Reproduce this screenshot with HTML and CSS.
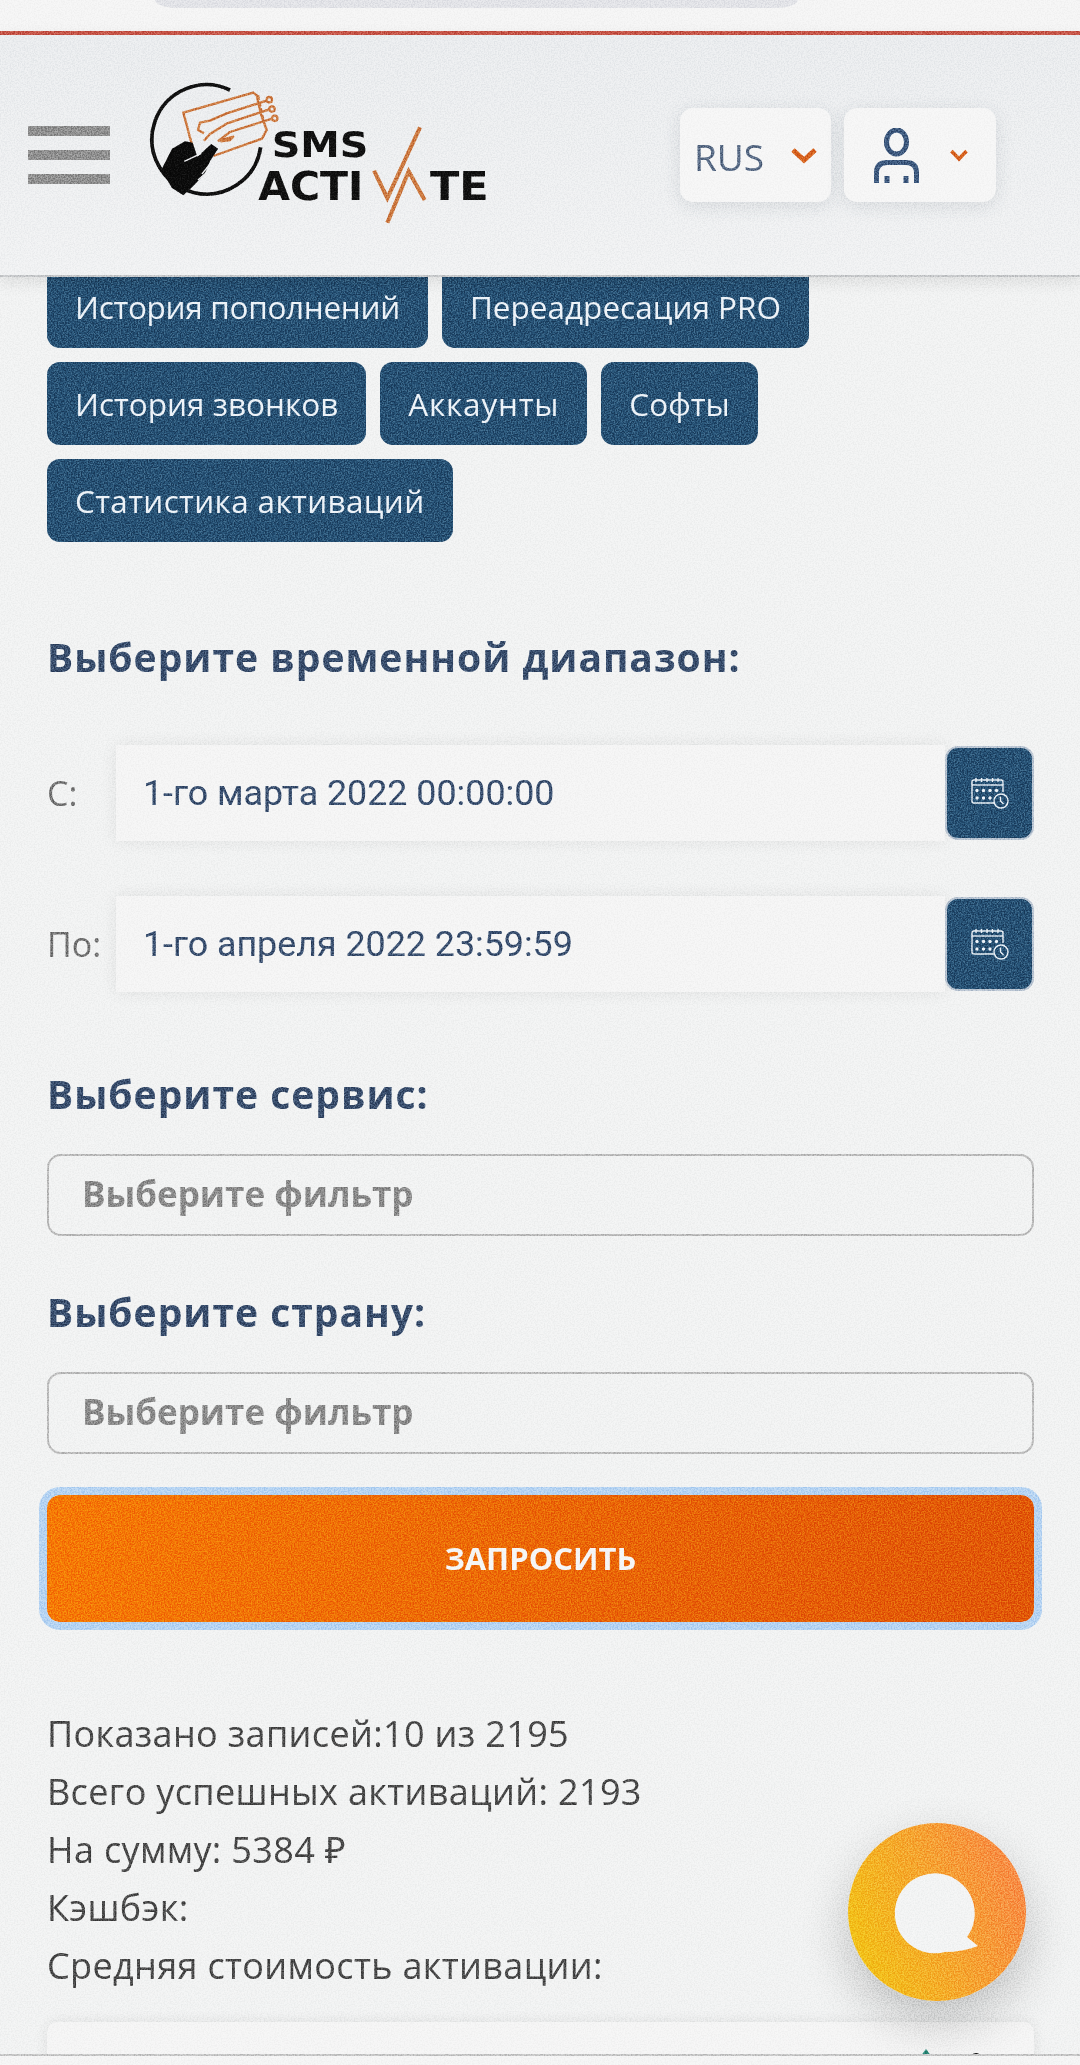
FILE: index.html
```html
<!DOCTYPE html>
<html lang="ru">
<head>
<meta charset="utf-8">
<title>SMS-Activate</title>
<link rel="stylesheet" href="styles.css">
</head>
<body>
<div class="page">
  <div class="topbar"><div class="pill"></div></div>
  <header class="header">
    <div class="burger"><span></span><span></span><span></span></div>
    <svg class="logo" viewBox="0 0 1110 510" width="370" height="170" aria-label="SMS Activate">
      <path d="M300 60A164 164 0 1 0 392 232" fill="none" stroke="#111" stroke-width="11"/>
      <g fill="none" stroke="#cf7d42" stroke-width="7" stroke-linejoin="round">
        <path d="M190 240L160 128L370 68L380 76L392 130L410 180L396 206L250 258"/>
        <path d="M410 92L290 130L240 152L210 158L204 180L222 190"/>
        <path d="M418 118L292 160L240 192L222 212"/>
        <path d="M426 146L300 186L266 212L310 200L300 210L272 214"/>
        <path d="M384 76L400 150" stroke-dasharray="14 6"/>
        <circle cx="418" cy="89" r="8"/><circle cx="426" cy="117" r="8"/><circle cx="434" cy="145" r="8"/>
      </g>
      <path d="M94 300L126 236L165 214L188 218L202 260L244 222L264 236L240 274L224 312L192 346L160 376L126 354Z" fill="#0c0c0c"/>
      <path d="M163 274L214 250M196 350L232 336M204 330L238 300M216 312L240 282" fill="none" stroke="#f0f1f3" stroke-width="4"/>
      <text class="logo-text" x="425" y="262" textLength="290" lengthAdjust="spacingAndGlyphs">SMS</text>
      <text class="logo-text logo-big" x="385" y="390" textLength="315" lengthAdjust="spacingAndGlyphs">ACTI</text>
      <text class="logo-text logo-big" x="900" y="390" textLength="176" lengthAdjust="spacingAndGlyphs">TE</text>
      <path d="M732 302L772 384L870 172M772 458L836 304L884 390" fill="none" stroke="#cf7d42" stroke-width="12"/>
    </svg>
    <div class="lang">
      <span class="lang-text">RUS</span>
      <svg class="chev-big" viewBox="0 0 26 17" width="26" height="17"><path d="M2 3L13 13L24 3" fill="none" stroke="#d9661f" stroke-width="5"/></svg>
    </div>
    <div class="user">
      <svg viewBox="0 0 45 55" width="45" height="55"><g fill="none" stroke="#3f5c82" stroke-width="5"><ellipse cx="22.5" cy="14" rx="10" ry="12"/><path d="M2.500 55V45Q2.500 34.500 13 34.500H32Q42.500 34.500 42.500 45V55"/><path d="M13 48V55M32 48V55"/></g></svg>
      <svg class="chev-small" viewBox="0 0 18 13" width="18" height="13"><path d="M1.500 2L9 10L16.500 2" fill="none" stroke="#d9661f" stroke-width="3.500"/></svg>
    </div>
  </header>

  <main class="main">
    <nav class="tabs">
      <a class="tab tab-tight">История пополнений</a>
      <a class="tab">Переадресация PRO</a>
      <a class="tab">История звонков</a>
      <a class="tab tab-wide">Аккаунты</a>
      <a class="tab">Софты</a>
      <a class="tab tab-loose">Статистика активаций</a>
    </nav>

    <h2 class="title title-range">Выберите временной диапазон:</h2>

    <div class="date-row">
      <span class="date-label">С:</span>
      <div class="date-input"><span class="date-value">1-го марта 2022 00:00:00</span></div>
      <button class="date-btn"><svg viewBox="0 0 38 31" width="38" height="31"><use href="#cal"/></svg></button>
    </div>
    <div class="date-row date-row-next">
      <span class="date-label">По:</span>
      <div class="date-input"><span class="date-value">1-го апреля 2022 23:59:59</span></div>
      <button class="date-btn"><svg viewBox="0 0 38 31" width="38" height="31"><use href="#cal"/></svg></button>
    </div>

    <h2 class="title title-service">Выберите сервис:</h2>
    <div class="select">Выберите фильтр</div>
    <h2 class="title title-country">Выберите страну:</h2>
    <div class="select">Выберите фильтр</div>

    <button class="submit">ЗАПРОСИТЬ</button>

    <div class="stats">
      <div>Показано записей:10 из 2195</div>
      <div>Всего успешных активаций: 2193</div>
      <div>На сумму: 5384 ₽</div>
      <div>Кэшбэк:</div>
      <div>Средняя стоимость активации:</div>
    </div>

    <div class="table-card">
      <svg class="sort" viewBox="0 0 64 12" width="64" height="12"><path d="M0 12L6 4L12 12Z" fill="#2a8c7c"/><circle cx="56" cy="12" r="4" fill="#111"/></svg>
    </div>
  </main>

  <button class="chat" aria-label="Чат">
    <svg viewBox="0 0 178 178" width="178" height="178">
      <defs><linearGradient id="chatg" x1="0" y1="0.75" x2="1" y2="0.35"><stop offset="0.05" stop-color="#f3c418"/><stop offset="1" stop-color="#f88f48"/></linearGradient></defs>
      <circle cx="89" cy="89" r="89" fill="url(#chatg)"/>
      <path d="M119 114A40 40 0 1 0 97 129Q114 129 130 123Z" fill="#f3f4f4"/>
    </svg>
  </button>
  <div class="bottom-bar"></div>

  <svg class="defs" width="0" height="0" aria-hidden="true">
    <symbol id="cal" viewBox="0 0 38 31">
      <g fill="none" stroke="#eef3f8" stroke-width="1.400">
        <path d="M26 25H3Q1 25 1 23V4Q1 2 3 2H30Q32 2 32 4V14"/>
        <path d="M1 7H32"/>
        <path d="M5 0V4M10.500 0V4M16 0V4M21.500 0V4M27 0V4"/>
      </g>
      <g fill="#eef3f8">
        <circle cx="6" cy="12.500" r="1.700"/><circle cx="12.500" cy="12.500" r="1.700"/><circle cx="19" cy="12.500" r="1.700"/><circle cx="25.500" cy="12.500" r="1.700"/>
        <circle cx="6" cy="20" r="1.700"/><circle cx="12.500" cy="20" r="1.700"/><circle cx="19" cy="20" r="1.700"/>
      </g>
      <circle cx="30" cy="23" r="7" fill="#275377" stroke="#eef3f8" stroke-width="1.400"/>
      <path d="M29.500 18.500V23L32.500 26" fill="none" stroke="#eef3f8" stroke-width="1.400"/>
    </symbol>
  </svg>

  <svg class="grain" width="1080" height="2065" aria-hidden="true">
    <filter id="noise" x="0" y="0" width="100%" height="100%" color-interpolation-filters="sRGB"><feTurbulence type="fractalNoise" baseFrequency="0.7" numOctaves="2" seed="4"/><feColorMatrix type="matrix" values="2.5 0 0 0 -0.8  2.5 0 0 0 -0.8  2.5 0 0 0 -0.8  0 0 0 0 1"/></filter>
    <rect width="1080" height="2065" filter="url(#noise)"/>
  </svg>
</div>
</body>
</html>
```
FILE: styles.css
```css
* { box-sizing: border-box; }
html, body { margin: 0; padding: 0; }
body { background: #f2f3f3; font-family: "Open Sans", "Noto Sans", sans-serif; }
.page { position: relative; width: 1080px; height: 2065px; overflow: hidden; background: #f2f3f3; }

.topbar { height: 31px; background: #f5f5f5; padding-left: 155px; }
.pill { width: 643px; height: 8px; background: #e4e5e9; border-radius: 0 0 30px 30px / 0 0 10px 10px; }

.header {
  position: relative; z-index: 2;
  display: flex; align-items: center;
  height: 246px; padding: 0 84px 0 28px;
  border-top: 4px solid #c9584a;
  border-bottom: 2px solid #c9cbcd;
  background: linear-gradient(180deg, #ebedef 0%, #f1f2f3 100%);
  box-shadow: 0 6px 14px rgba(0, 0, 0, .08);
}
.burger { display: flex; flex-direction: column; gap: 14px; width: 82px; }
.burger span { display: block; height: 10px; background: #949494; }
.logo { margin-left: 20px; flex: none; }
.logo-text { font-family: "DejaVu Sans", sans-serif; font-weight: 700; font-size: 104px; fill: #111; }
.logo-big { font-size: 116px; }

.lang, .user {
  display: flex; align-items: center;
  height: 94px;
  background: #f6f6f6; border-radius: 13px;
  box-shadow: 0 4px 18px rgba(60, 70, 90, .12);
}
.lang { width: 151px; margin-left: auto; padding: 0 14px 0 14px; justify-content: space-between; }
.user { width: 152px; margin-left: 13px; padding: 0 28px 0 30px; justify-content: space-between; }
.lang-text { font-size: 37px; color: #5a6d88; line-height: 1; padding-top: 2px; }

.main { margin-top: -12px; padding: 0 46px 0 47px; }
.tabs { display: flex; flex-wrap: wrap; gap: 14px; }
.tab {
  display: flex; align-items: center;
  height: 83px; padding: 0 28px;
  background: #275377; color: #eef3f8;
  border-radius: 13px;
  font-size: 31.500px; white-space: nowrap;
}
.tab-tight { letter-spacing: -.3px; }
.tab-wide { letter-spacing: .8px; }
.tab-loose { letter-spacing: .33px; }

.title { margin: 0; font-size: 39px; line-height: 50px; font-weight: 700; letter-spacing: 1px; color: #3a5070; }
.title-range { margin-top: 90px; }
.title-service { margin-top: 77px; }
.title-country { margin-top: 51px; }

.date-row { display: flex; align-items: center; height: 96px; margin-top: 63px; }
.date-row-next { margin-top: 55px; }
.date-label { flex: none; width: 69px; font-size: 34px; color: #777; }
.date-input {
  flex: 1; align-self: stretch;
  display: flex; align-items: center;
  padding-left: 27px;
  background: #f5f5f5;
  box-shadow: 0 0 16px rgba(0, 0, 0, .07);
}
.date-value { font-family: Roboto, sans-serif; font-size: 35.800px; color: #3b5273; }
.date-btn {
  flex: none; position: relative;
  display: flex; align-items: center; justify-content: center;
  width: 89px; height: 94px; padding: 0;
  background: #275377; border: 2px solid #bcc7d4; border-radius: 13px;
}

.select {
  display: flex; align-items: center;
  height: 82px; margin-top: 35px; padding: 0 0 4px 33px;
  border: 2px solid #bfbfbf; border-radius: 14px;
  font-size: 35px; font-weight: 700; color: #8e8e8e;
}

.submit {
  display: block; width: 100%; height: 127px; margin-top: 41px; padding: 0 0 2px;
  background: linear-gradient(90deg, #f67d06 0%, #e35a08 100%);
  border: 0; border-radius: 13px;
  outline: 8px solid #b9d6f3;
  color: #f6f6f6; font-family: "Open Sans", sans-serif; font-size: 31px; font-weight: 700;
}

.stats { margin-top: 83px; font-size: 36px; line-height: 58px; letter-spacing: .35px; color: #4b4b4b; }

.table-card {
  display: flex; justify-content: flex-end;
  height: 120px; margin-top: 27px; padding: 23px 50px 0 0;
  background: #f5f5f5; border-radius: 10px;
  box-shadow: 0 0 14px rgba(0, 0, 0, .08);
}
.sort { flex: none; }

.chat {
  position: absolute; left: 848px; top: 1823px; z-index: 3;
  width: 178px; height: 178px; padding: 0; border: 0;
  background: none; border-radius: 50%;
  box-shadow: 0 20px 50px rgba(0, 0, 0, .2);
}
.bottom-bar {
  position: absolute; left: 0; right: 0; bottom: 0; z-index: 4;
  height: 11px; background: #f5f5f5; border-top: 2px solid #c9c9c9;
}
.defs { position: absolute; }
.grain { position: absolute; left: 0; top: 0; z-index: 5; pointer-events: none; mix-blend-mode: soft-light; opacity: .5; }
```
